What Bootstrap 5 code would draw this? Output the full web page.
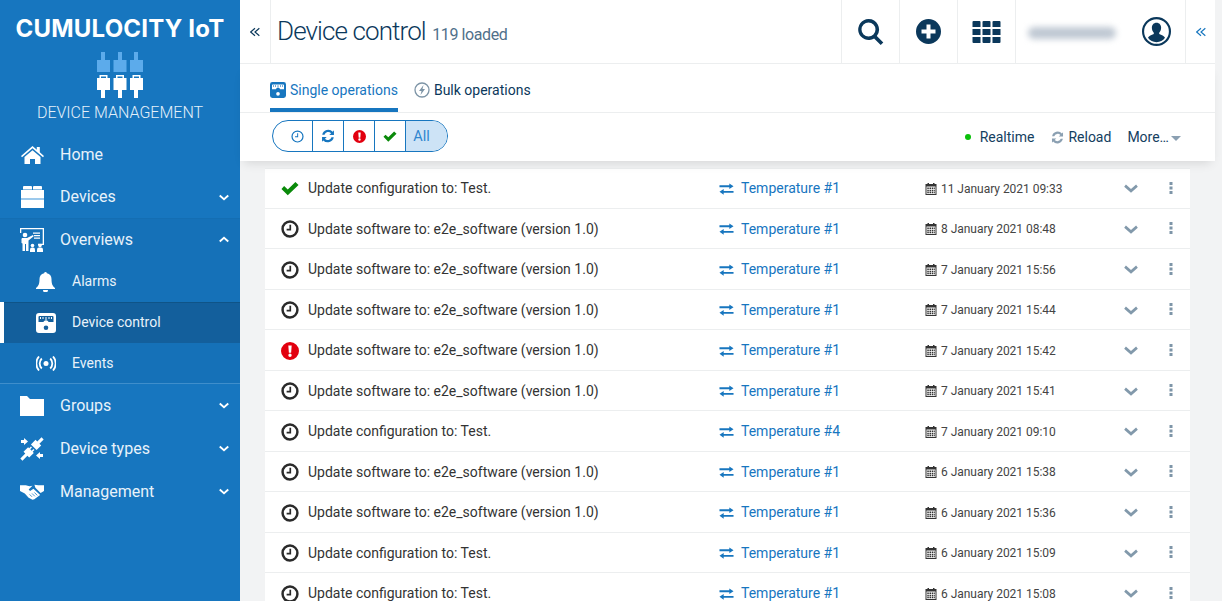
<!DOCTYPE html>
<html>
  <head>
    <title>Device control</title>
    <link href="https://cdn.jsdelivr.net/npm/bootstrap@5.3.3/dist/css/bootstrap.min.css" rel="stylesheet" />
    <script src="https://cdn.jsdelivr.net/npm/bootstrap@5.3.3/dist/js/bootstrap.bundle.min.js"></script>
    <style>
      html, body { height: 100%; overflow: hidden; }
      body { font-family: Roboto, "Liberation Sans", sans-serif; font-size: 14px; color: #333; background: #f2f3f4; }
      svg { display: block; fill: currentColor; flex: none; }
      .app-shell { width: 1222px; height: 601px; overflow: hidden; }

      /* sidebar */
      .side-nav { width: 240px; background: #1776bf; color: #fff; flex: none; }
      .brand-name { font-family: Inter, Roboto, sans-serif; font-weight: 700; font-size: 24px; line-height: 28px; padding-top: 15px; letter-spacing: .2px; white-space: nowrap; }
      .brand-logo { margin: 9px auto 0; }
      .brand-app { font-weight: 300; font-size: 16px; line-height: 20px; margin-top: 5px; color: #e3f0fa; height: 30px; }
      .nav-main { height: 43px; padding-left: 20px; font-size: 16px; color: #e8f2fa; }
      .nav-main .nav-glyph { width: 24px; color: #fff; margin-right: 16px; }
      .nav-main .nav-caret { margin-left: auto; margin-right: 11px; color: #fff; }
      .nav-short { height: 42px; }
      .nav-sub { height: 41px; padding-left: 36px; color: #e8f2fa; }
      .nav-sub .nav-glyph { width: 20px; color: #fff; margin-right: 16px; }
      .nav-sub-last { height: 40px; }
      .nav-open { background: #1571b8; border-bottom: 1px solid #3f8ecb; box-shadow: inset 0 1px 0 #146eb3; }
      .nav-active { background: #135f9c; border-left: 4px solid #fff; box-shadow: inset 0 1px 0 #0f5488; padding-left: 32px; }

      /* header */
      .main-area { min-width: 0; }
      .top-bar { height: 64px; background: #fff; border-bottom: 1px solid #eceeef; color: #0b385b; }
      .cell-back { width: 31px; border-right: 1px solid #eceeef; color: #0b385b; }
      .page-title { font-weight: 300; font-size: 26px; padding-left: 6px; letter-spacing: -.9px; white-space: nowrap; }
      .page-title small { font-size: 16px; color: #50708a; font-weight: 400; letter-spacing: -.4px; margin-left: 1px; }
      .cell-action { width: 58px; border-left: 1px solid #eceeef; }
      .cell-user { width: 170px; border-left: 1px solid #eceeef; padding: 0 14px 0 12px; }
      .user-name { width: 88px; height: 12px; margin-top: 3px; border-radius: 6px; background: #bfc8d3; filter: blur(3px); }
      .cell-toggle { width: 30px; border-left: 1px solid #eceeef; color: #1776bf; }
      .right-strip { width: 7px; flex: none; background: #f2f3f4; }

      /* tabs and action bar */
      .sheet { background: #fff; position: relative; z-index: 2; box-shadow: 0 6px 10px -4px rgba(0, 0, 0, .12); }
      .tab-row { height: 49px; border-bottom: 1px solid #eceeef; padding-left: 30px; }
      .tab-item { height: 48px; color: #0b385b; padding-top: 4px; margin-right: 16px; }
      .tab-item.is-on { color: #1776bf; border-bottom: 4px solid #1776bf; padding-top: 8px; }
      .action-row { height: 48px; padding: 0 34px 0 32px; color: #14405f; }
      .status-pill { height: 32px; border: 1px solid #1776bf; border-radius: 16px; overflow: hidden; margin-top: -2px; }
      .status-pill > span { width: 31px; border-left: 1px solid #1776bf; }
      .status-pill > span:first-child { width: 39px; border-left: 0; padding-left: 9px; }
      .status-pill > .is-on { width: 42px; background: #cde3f6; color: #2f86cf; font-size: 14.500px; padding: 1px 10px 0 0; }
      .live-dot { width: 6px; height: 6px; border-radius: 50%; background: #0ac00a; margin-right: 9px; }
      .more-caret { width: 0; height: 0; border-left: 5px solid transparent; border-right: 5px solid transparent; border-top: 5px solid #8ba0b2; margin-left: 2px; margin-top: 2px; }
      .gap-live { margin-right: 17px; }

      /* list */
      .op-list { margin: 7px 32px 0 25px; background: #fff; border-top: 1px solid #eceeef; }
      .op-row { height: 40.5px; padding-top: 2px; border-bottom: 1px solid #eceeef; color: #333; white-space: nowrap; }
      .op-row:first-child { margin-top: -1px; }
      .col-status { width: 18px; margin-left: 16px; margin-right: 9px; flex: none; }
      .col-text { width: 411px; flex: none; }
      .col-device { width: 206px; flex: none; color: #1776bf; }
      .col-device svg { margin-right: 7px; }
      .col-date { width: 199px; flex: none; font-size: 12px; color: #444; letter-spacing: -.03px; }
      .col-date svg { margin-right: 4px; color: #333; }
      .col-chevron { width: 45px; flex: none; color: #8299ab; }
      .col-dots { color: #7e95a8; margin-bottom: 2px; }
      .c-ok { color: #0a8a0a; }
      .c-bad { color: #e2000f; }
      .c-wait { color: #2a2a2a; }
      .c-blue { color: #1776bf; }
      .c-grey { color: #8ba0b2; }
    </style>
  </head>
  <body>
    <svg width="0" height="0" style="position:absolute">
      <symbol id="i-clock" viewBox="0 0 16 16"><path d="M8 .3a7.700 7.700 0 1 0 0 15.400A7.700 7.700 0 0 0 8 .3zm0 2.200a5.500 5.500 0 1 1 0 11 5.500 5.500 0 0 1 0-11z" fill-rule="evenodd"/><path d="M9 4.300v5H5V7.800h2.500V4.300z"/></symbol>
      <symbol id="i-clock-thin" viewBox="0 0 16 16"><path d="M8 .5a7.500 7.500 0 1 0 0 15 7.500 7.500 0 0 0 0-15zm0 1.500a6 6 0 1 1 0 12A6 6 0 0 1 8 2z" fill-rule="evenodd"/><path d="M8.800 4v5H5V7.800h2.600V4z"/></symbol>
      <symbol id="i-check" viewBox="0 0 20 16"><path d="M.5 8.500 3.500 5.300 7.500 9 16 .8 19.500 4 7.500 15.500z"/></symbol>
      <symbol id="i-alert" viewBox="0 0 16 16"><path d="M8 0a8 8 0 1 0 0 16A8 8 0 0 0 8 0zM6.500 3h3L9 9.500H7zM8 10.300a1.500 1.500 0 1 1 0 3 1.500 1.500 0 0 1 0-3z" fill-rule="evenodd"/></symbol>
      <symbol id="i-refresh" viewBox="0 0 16 16"><path d="M14.800 1.500v5.300H9.500l2-2A4.500 4.500 0 0 0 4 6.500H1.400a7 7 0 0 1 12-3.500zM1.200 14.500V9.200h5.300l-2 2A4.500 4.500 0 0 0 12 9.500h2.600a7 7 0 0 1-12 3.500z"/></symbol>
      <symbol id="i-swap" viewBox="0 0 16 12"><path d="M11 0l4.500 3L11 6V4H.5V2H11zM5 6v2h10.500v2H5v2L.5 9z"/></symbol>
      <symbol id="i-cal" viewBox="0 0 12 12"><path d="M2.500 0h1.500v1h4V0h1.500v1H11.500v11H.5V1h2zM1.500 3.500v7.500h9V3.500z" fill-rule="evenodd"/><path d="M2.300 4.500h1.500V6H2.300zM4.500 4.500H6V6H4.500zM6.700 4.500h1.500V6H6.700zM8.800 4.500h1V6h-1zM2.300 6.700h1.500v1.500H2.300zM4.500 6.700H6v1.500H4.500zM6.700 6.700h1.500v1.500H6.700zM8.800 6.700h1v1.500h-1zM2.300 8.800h1.500v1.400H2.300zM4.500 8.800H6v1.400H4.500zM6.700 8.800h1.500v1.400H6.700zM8.800 8.800h1v1.400h-1z"/></symbol>
      <symbol id="i-chev" viewBox="0 0 16 10"><path d="M2.200.5 8 5.700 13.800.5 15.800 3 8 9.900.2 3z"/></symbol>
      <symbol id="i-dots" viewBox="0 0 4 12"><rect x=".5" y="0" width="3" height="3"/><rect x=".5" y="4.500" width="3" height="3"/><rect x=".5" y="9" width="3" height="3"/></symbol>
      <symbol id="i-back" viewBox="0 0 12 12"><path d="M6 1.500.8 6 6 10.500M11.200 1.500 6 6l5.200 4.500" fill="none" stroke="currentColor" stroke-width="1.400"/></symbol>
      <symbol id="i-meter" viewBox="0 0 20 20"><path d="M3 0h14a3 3 0 0 1 3 3v14a3 3 0 0 1-3 3H3a3 3 0 0 1-3-3V3a3 3 0 0 1 3-3zm.5 3a1 1 0 0 0-1 1v5h4.800a3 3 0 0 1 5.400 0h4.800V4a1 1 0 0 0-1-1zM10 12.500a2.300 2.300 0 1 0 0 4.600 2.300 2.300 0 0 0 0-4.600z" fill-rule="evenodd"/><path d="M4 4h1v2H4zM6.500 4h1v2h-1zM9.500 4h1v3h-1zM12.500 4h1v2h-1zM15 4h1v2h-1z"/></symbol>
    </svg>

    <div class="app-shell d-flex">
      <nav class="side-nav d-flex flex-column">
        <div class="text-center">
          <div class="brand-name">CUMULOCITY IoT</div>
          <svg class="brand-logo" width="48" height="46" viewBox="0 0 48 46">
            <g fill="#5cabeb"><rect x="5" y="0" width="4" height="9"/><rect x="22" y="0" width="4" height="9"/><rect x="38" y="0" width="4" height="9"/><rect x="1" y="8" width="13" height="12"/><rect x="17.500" y="8" width="13" height="12"/><rect x="34" y="8" width="13" height="12"/></g>
            <g fill="#fff"><path d="M3.500 23h8v3h2.500v12H9v8H5v-8H1V26h2.500zM5 24.500v1.500h5v-1.500z" fill-rule="evenodd"/><path d="M20 23h8v3h2.500v12H26v8h-4v-8h-4.500V26H20zM21.500 24.500v1.500h5v-1.500z" fill-rule="evenodd"/><path d="M36.500 23h8v3H47v12h-5v8h-4v-8h-4V26h2.500zM38 24.500v1.500h5v-1.500z" fill-rule="evenodd"/></g>
          </svg>
          <div class="brand-app">DEVICE MANAGEMENT</div>
        </div>

        <div class="nav-main d-flex align-items-center">
          <span class="nav-glyph"><svg class="ms-auto" width="23" height="18" viewBox="0 0 23 18"><path d="M11.500 0 15.800 3.700V1h3v5.300L23 10l-1 1.300L11.500 2.300 1 11.300 0 10zM3.500 11l8-6.800 8 6.800v7h-5.500v-5H9v5H3.500z"/></svg></span>
          Home
        </div>
        <div class="nav-main nav-short d-flex align-items-center">
          <span class="nav-glyph"><svg class="ms-auto" width="23" height="22" viewBox="0 0 23 22"><path d="M2 1a1 1 0 0 1 1-1h7a1 1 0 0 1 1 1v2.500H2zM12 1a1 1 0 0 1 1-1h7a1 1 0 0 1 1 1v2.500h-9zM0 4h23v8H0zM0 14h23v8H0z"/><path d="M0 12h23v2H0z" fill="#9cc9ec"/></svg></span>
          Devices
          <svg class="nav-caret" width="10" height="7"><use href="#i-chev"/></svg>
        </div>
        <div class="nav-open">
          <div class="nav-main d-flex align-items-center">
            <span class="nav-glyph"><svg width="24" height="24" viewBox="0 0 24 24"><path d="M0 0h24v17h-6v-1.300h4.700V1.300H1.300V5H0z"/><path d="M13 4.500h7v1.200h-7zM14 7h6v1.200h-6zM14 9.500h6v1.200h-6z"/><circle cx="5" cy="7" r="2.300"/><path d="M2 10h5l6-3 .7 1.300L8.500 12.500V23H6v-7H5v7H2.500v-7.500L1.500 15V11z"/><circle cx="12.500" cy="17.500" r="1.800"/><path d="M10 24v-2.500a2 2 0 0 1 2-2h1a2 2 0 0 1 2 2V24z"/><circle cx="20" cy="17.500" r="1.800"/><path d="M17 24v-2.500a2 2 0 0 1 2-2h2a2 2 0 0 1 2 2V24z"/></svg></span>
            Overviews
            <svg class="nav-caret" width="10" height="7" viewBox="0 0 16 10"><path d="M8 .1 15.800 7 13.800 9.500 8 4.300 2.200 9.500.2 7z"/></svg>
          </div>
          <div class="nav-sub d-flex align-items-center">
            <span class="nav-glyph"><svg width="19" height="20" viewBox="0 0 19 20"><path d="M9.500 0a1.500 1.500 0 0 1 1.400 1.200A6 6 0 0 1 15.500 7c0 5 1 7 3.500 9v1H0v-1c2.500-2 3.500-4 3.500-9a6 6 0 0 1 4.600-5.800A1.500 1.500 0 0 1 9.500 0zM7 18h5a2.500 2.500 0 0 1-5 0z"/></svg></span>
            Alarms
          </div>
          <div class="nav-sub nav-active d-flex align-items-center">
            <span class="nav-glyph"><svg width="20" height="20"><use href="#i-meter"/></svg></span>
            Device control
          </div>
          <div class="nav-sub nav-sub-last d-flex align-items-center">
            <span class="nav-glyph"><svg width="20" height="15" viewBox="0 0 20 15"><circle cx="10" cy="7.500" r="2.500"/><path d="M5.800 2.500a7 7 0 0 0 0 10M14.200 2.500a7 7 0 0 1 0 10M3 .5a10.500 10.500 0 0 0 0 14M17 .5a10.500 10.500 0 0 1 0 14" fill="none" stroke="currentColor" stroke-width="1.800"/></svg></span>
            Events
          </div>
        </div>
        <div class="nav-main d-flex align-items-center">
          <span class="nav-glyph"><svg width="24" height="20" viewBox="0 0 24 20"><path d="M0 0h7l3 3h14v17H0z"/></svg></span>
          Groups
          <svg class="nav-caret" width="10" height="7"><use href="#i-chev"/></svg>
        </div>
        <div class="nav-main d-flex align-items-center">
          <span class="nav-glyph"><svg width="24" height="24" viewBox="0 0 24 24"><g transform="rotate(45 12 12)"><path d="M10.500-3h3v6h2.500v6.500H8V3h2.500z"/><path d="M8 13.500h1.500V11H11v2.500h2V11h1.500v2.500H16V20h-2.500v7h-3v-7H8z"/></g><path d="M1 3h3V1l4 3.500L4 8V6H1zM23 17h-3v-2l-4 3.500 4 3.500v-2h3z"/></svg></span>
          Device types
          <svg class="nav-caret" width="10" height="7"><use href="#i-chev"/></svg>
        </div>
        <div class="nav-main d-flex align-items-center">
          <span class="nav-glyph"><svg width="24" height="16" viewBox="0 0 25 16"><path d="M0 1h6l4 1 3-.5-4 4 1.500 1.500L14 4.500 21 11l-4 3-2 1.500-2 .5-4-2-4-4.500L0 7z"/><path d="M25 1h-6l-4-.5L16 3.500 21.500 9 25 7z"/><path d="M10 10.500l2.500 2.500M12.500 9.500l3 3M15 8.500l3 3" fill="none" stroke="#1776bf" stroke-width=".8"/></svg></span>
          Management
          <svg class="nav-caret" width="10" height="7"><use href="#i-chev"/></svg>
        </div>
      </nav>

      <div class="main-area flex-grow-1 d-flex flex-column">
        <div class="d-flex flex-grow-0">
          <div class="flex-grow-1" style="min-width:0">
            <header class="top-bar d-flex align-items-stretch">
              <div class="cell-back d-flex align-items-center justify-content-center"><svg width="10" height="10"><use href="#i-back"/></svg></div>
              <div class="page-title d-flex align-items-center flex-grow-1"><span>Device control <small>119 loaded</small></span></div>
              <div class="cell-action d-flex align-items-center justify-content-center"><svg width="28" height="28" viewBox="0 0 28 28"><path d="M11.500 1a10.500 10.500 0 0 1 8.300 16.900l6.500 6.500-2.600 2.600-6.600-6.500A10.500 10.500 0 1 1 11.500 1zm0 3.500a7 7 0 1 0 0 14 7 7 0 0 0 0-14z" fill-rule="evenodd"/></svg></div>
              <div class="cell-action d-flex align-items-center justify-content-center"><svg width="25" height="25" viewBox="0 0 25 25"><path d="M12.500 0a12.500 12.500 0 1 1 0 25 12.500 12.500 0 0 1 0-25zM10.500 5.500v5h-5v4h5v5h4v-5h5v-4h-5v-5z" fill-rule="evenodd"/></svg></div>
              <div class="cell-action d-flex align-items-center justify-content-center"><svg width="29" height="22" viewBox="0 0 28 22"><path d="M0 1a1 1 0 0 1 1-1h6a1 1 0 0 1 1 1v5H0zM10 1a1 1 0 0 1 1-1h6a1 1 0 0 1 1 1v5h-8zM20 1a1 1 0 0 1 1-1h6a1 1 0 0 1 1 1v5h-8zM0 8h8v6H0zM10 8h8v6h-8zM20 8h8v6h-8zM0 16h8v6H1a1 1 0 0 1-1-1zM10 16h8v5a1 1 0 0 1-1 1h-6a1 1 0 0 1-1-1zM20 16h8v5a1 1 0 0 1-1 1h-7z"/></svg></div>
              <div class="cell-user d-flex align-items-center justify-content-between">
                <div class="user-name"></div>
                <svg width="29" height="29" viewBox="0 0 30 30"><path d="M15 0a15 15 0 1 1 0 30 15 15 0 0 1 0-30zm0 2.200a12.800 12.800 0 1 0 0 25.600 12.800 12.800 0 0 0 0-25.600z" fill-rule="evenodd"/><path d="M15 6c3 0 4.800 2.200 4.800 5.200 0 2.300-1 4-2 5v1.500c2.500 1 5 2 6 3.800A11 11 0 0 1 15 26a11 11 0 0 1-8.800-4.500c1-1.800 3.500-2.800 6-3.800v-1.500c-1-1-2-2.700-2-5C10.200 8.200 12 6 15 6z"/></svg>
              </div>
              <div class="cell-toggle d-flex align-items-center justify-content-center"><svg width="10" height="10"><use href="#i-back"/></svg></div>
            </header>
            <div class="sheet">
              <div class="tab-row d-flex align-items-stretch">
                <div class="tab-item is-on d-flex align-items-center gap-1"><svg width="16" height="16"><use href="#i-meter"/></svg>Single operations</div>
                <div class="tab-item d-flex align-items-center gap-1"><svg width="16" height="16" viewBox="0 0 16 16"><circle cx="8" cy="8" r="7" fill="none" stroke="#7d94a6" stroke-width="1.300"/><path d="M9.500 3 5 9h2.500l-1 4L11 7H8.500z" fill="#7d94a6"/></svg>Bulk operations</div>
              </div>
              <div class="action-row d-flex align-items-center">
                <div class="status-pill d-flex align-items-stretch">
                  <span class="d-flex align-items-center justify-content-center"><svg width="13" height="13" class="c-blue"><use href="#i-clock-thin"/></svg></span>
                  <span class="d-flex align-items-center justify-content-center"><svg width="14" height="14" class="c-blue"><use href="#i-refresh"/></svg></span>
                  <span class="d-flex align-items-center justify-content-center"><svg width="13" height="13" class="c-bad"><use href="#i-alert"/></svg></span>
                  <span class="d-flex align-items-center justify-content-center"><svg width="14" height="11" class="c-ok"><use href="#i-check"/></svg></span>
                  <span class="is-on d-flex align-items-center justify-content-center">All</span>
                </div>
                <div class="ms-auto d-flex align-items-center">
                  <span class="live-dot"></span><span class="gap-live">Realtime</span>
                  <svg width="13" height="13" class="me-1 c-grey"><use href="#i-refresh"/></svg><span class="me-3">Reload</span>
                  <span>More…</span><span class="more-caret"></span>
                </div>
              </div>
            </div>
          </div>
          <div class="right-strip"></div>
        </div>

        <div class="op-list" id="opList"></div>
      </div>
    </div>

    <script>
      const ops = [
        ["ok", "Update configuration to: Test.", "Temperature #1", "11 January 2021 09:33"],
        ["wait", "Update software to: e2e_software (version 1.0)", "Temperature #1", "8 January 2021 08:48"],
        ["wait", "Update software to: e2e_software (version 1.0)", "Temperature #1", "7 January 2021 15:56"],
        ["wait", "Update software to: e2e_software (version 1.0)", "Temperature #1", "7 January 2021 15:44"],
        ["bad", "Update software to: e2e_software (version 1.0)", "Temperature #1", "7 January 2021 15:42"],
        ["wait", "Update software to: e2e_software (version 1.0)", "Temperature #1", "7 January 2021 15:41"],
        ["wait", "Update configuration to: Test.", "Temperature #4", "7 January 2021 09:10"],
        ["wait", "Update software to: e2e_software (version 1.0)", "Temperature #1", "6 January 2021 15:38"],
        ["wait", "Update software to: e2e_software (version 1.0)", "Temperature #1", "6 January 2021 15:36"],
        ["wait", "Update configuration to: Test.", "Temperature #1", "6 January 2021 15:09"],
        ["wait", "Update configuration to: Test.", "Temperature #1", "6 January 2021 15:08"],
      ];
      const statusIcon = {
        ok: '<svg width="18" height="15" class="c-ok"><use href="#i-check"/></svg>',
        bad: '<svg width="18" height="18" class="c-bad"><use href="#i-alert"/></svg>',
        wait: '<svg width="18" height="18" class="c-wait"><use href="#i-clock"/></svg>',
      };
      let content = "";
      for (let op of ops) {
        content += `
          <div class="op-row d-flex align-items-center">
            <span class="col-status d-flex justify-content-center">${statusIcon[op[0]]}</span>
            <span class="col-text">${op[1]}</span>
            <span class="col-device d-flex align-items-center"><svg width="15" height="12"><use href="#i-swap"/></svg>${op[2]}</span>
            <span class="col-date d-flex align-items-center"><svg width="12" height="12"><use href="#i-cal"/></svg>${op[3]}</span>
            <span class="col-chevron"><svg width="14" height="9"><use href="#i-chev"/></svg></span>
            <span class="col-dots"><svg width="4" height="12"><use href="#i-dots"/></svg></span>
          </div>`;
      }
      document.getElementById("opList").innerHTML = content;
    </script>
  </body>
</html>
